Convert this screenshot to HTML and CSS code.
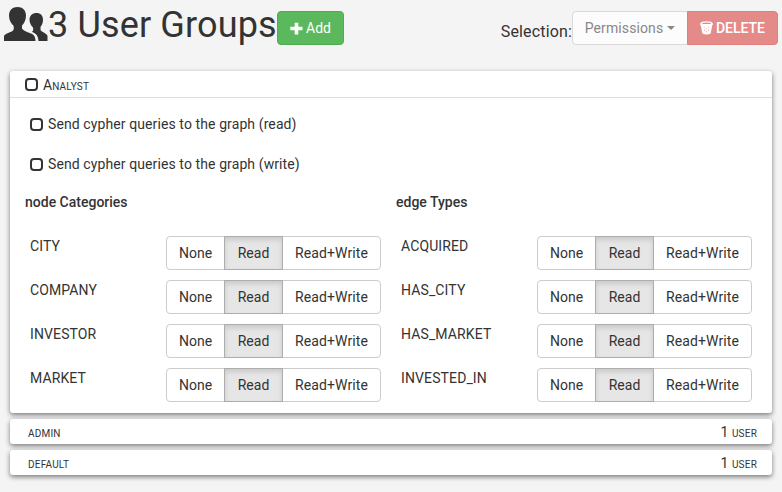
FILE: index.html
```
<!DOCTYPE html>
<html lang="en">
<head>
<meta charset="utf-8">
<title>User Groups</title>
<link rel="stylesheet" href="styles.css">
</head>
<body>
<header class="header">
  <svg class="users" viewBox="0 0 44 34" width="44" height="34" aria-hidden="true">
    <path d="M13.500 0C18.500 0 22 3.300 22 8.500C22 13 20 16.500 18 18.500V21.500C19 23.500 22 24.500 27 26.500C30.500 28 31.300 30 31.500 34H0V29.500C0 27 5 26 8.500 24C10 23 10 21 9.500 18.800C7 16.500 5 13 5 8.500C5 3.300 8.500 0 13.500 0Z"/>
    <path d="M32.500 6C36.500 6 39 8.700 39 12.500C39 16 37.800 18.200 36.500 20V23C37.500 25 43 26.500 43.500 29V34H34.500C34.300 29 32 26.500 27.800 24.800C29.200 24.200 29.500 22.500 29 20.500C27 18.500 25.500 16 25.500 12.500C25.500 8.700 28.500 6 32.500 6Z"/>
  </svg>
  <h1 class="title">3 User Groups</h1>
  <button class="btn btn-add"><svg viewBox="0 0 13 13" width="13" height="13" aria-hidden="true"><path d="M4.700 0.800h3.600v4h4.200v3.400H8.300v4.300H4.700V8.200H0.300V4.800h4.400z"/></svg><span>Add</span></button>
  <div class="selection">
    <span class="selection-label">Selection:</span>
    <div class="group">
      <button class="btn permissions"><span>Permissions</span><i class="caret"></i></button>
      <button class="btn delete"><svg viewBox="0 0 13 14" width="13" height="14" aria-hidden="true"><path fill-rule="evenodd" d="M2 .8Q6.500-.5 11 .8L12.800 2.300V4.300H12.200L10.700 12.400Q6.500 14.500 2.300 12.400L.8 4.300H.2V2.300ZM2.300 2.100V3H10.700V2.100Q6.500 1 2.300 2.100ZM3.700 5.700V6.600H4.600V5.700ZM8 5.700V6.600H8.900V5.700ZM5.800 7.200V8.100H6.700V7.200ZM4 8.800V9.700H4.900V8.800ZM8 8.600V9.500H8.900V8.600ZM6 10.300V11.200H6.900V10.300Z"/></svg><span>DELETE</span></button>
    </div>
  </div>
</header>
<main class="cards">
  <section class="card open">
    <div class="card-head"><i class="check"></i><span class="name">A<span class="small">nalyst</span></span></div>
    <label class="option"><i class="check"></i><span>Send cypher queries to the graph (read)</span></label>
    <label class="option"><i class="check"></i><span>Send cypher queries to the graph (write)</span></label>
    <div class="columns">
      <div class="column">
        <h2 class="subtitle">node Categories</h2>
        <div class="row"><span class="row-name">CITY</span><div class="group"><button class="btn">None</button><button class="btn active">Read</button><button class="btn wide">Read+Write</button></div></div>
        <div class="row"><span class="row-name">COMPANY</span><div class="group"><button class="btn">None</button><button class="btn active">Read</button><button class="btn wide">Read+Write</button></div></div>
        <div class="row"><span class="row-name">INVESTOR</span><div class="group"><button class="btn">None</button><button class="btn active">Read</button><button class="btn wide">Read+Write</button></div></div>
        <div class="row"><span class="row-name">MARKET</span><div class="group"><button class="btn">None</button><button class="btn active">Read</button><button class="btn wide">Read+Write</button></div></div>
      </div>
      <div class="column">
        <h2 class="subtitle">edge Types</h2>
        <div class="row"><span class="row-name">ACQUIRED</span><div class="group"><button class="btn">None</button><button class="btn active">Read</button><button class="btn wide">Read+Write</button></div></div>
        <div class="row"><span class="row-name">HAS_CITY</span><div class="group"><button class="btn">None</button><button class="btn active">Read</button><button class="btn wide">Read+Write</button></div></div>
        <div class="row"><span class="row-name">HAS_MARKET</span><div class="group"><button class="btn">None</button><button class="btn active">Read</button><button class="btn wide">Read+Write</button></div></div>
        <div class="row"><span class="row-name">INVESTED_IN</span><div class="group"><button class="btn">None</button><button class="btn active">Read</button><button class="btn wide">Read+Write</button></div></div>
      </div>
    </div>
  </section>
  <section class="card closed"><span class="small">admin</span><span>1 <span class="small">user</span></span></section>
  <section class="card closed"><span class="small">default</span><span>1 <span class="small">user</span></span></section>
</main>
</body>
</html>
```
FILE: styles.css
```
* { box-sizing: border-box; }
body {
  margin: 0;
  min-height: 100vh;
  background: #f4f4f4;
  color: #333;
  font: 14px/20px Roboto, sans-serif;
}
.header {
  display: flex;
  align-items: flex-start;
  height: 71px;
  padding: 7px 4px 0;
}
.users { fill: #333; flex: none; }
.title {
  width: 229px;
  margin: -2px 0 0;
  font-size: 36px;
  font-weight: 400;
  line-height: 40px;
  letter-spacing: .15px;
  white-space: nowrap;
}
.btn {
  display: flex;
  align-items: center;
  justify-content: center;
  width: 59px;
  height: 34px;
  padding: 0;
  border: 1px solid #ccc;
  border-radius: 4px;
  background: #fff;
  color: #333;
  font: inherit;
  white-space: nowrap;
}
.btn svg { fill: currentColor; }
.btn-add {
  width: 67px;
  margin-top: 4px;
  gap: 3px;
  border-color: #4cae4c;
  background: #5cb85c;
  color: #fff;
}
.selection {
  display: flex;
  margin: 4px 0 0 auto;
}
.selection-label {
  margin-top: 11px;
  font-size: 16px;
  letter-spacing: .15px;
}
.group { display: flex; }
.group .btn + .btn { margin-left: -1px; }
.group .btn:not(:last-child) { border-top-right-radius: 0; border-bottom-right-radius: 0; }
.group .btn:not(:first-child) { border-top-left-radius: 0; border-bottom-left-radius: 0; }
.group .wide { width: 99px; letter-spacing: .1px; }
.group .active {
  z-index: 1;
  background: #e6e6e6;
  border-color: #adadad;
  box-shadow: inset 0 3px 5px rgba(0, 0, 0, .125);
}
.group .permissions {
  width: 116px;
  gap: 4px;
  border-color: #d9d9d9;
  background: #fcfcfc;
  color: #888;
  letter-spacing: .1px;
}
.caret {
  border: 4px solid transparent;
  border-top-color: currentColor;
  border-bottom: 0;
}
.group .delete {
  width: 91px;
  gap: 3px;
  background: #e48b89;
  border-color: #df7e7b;
  color: #fff;
  font-weight: 500;
}
.cards {
  display: flex;
  flex-direction: column;
  gap: 6px;
  padding: 0 10px 12px;
}
.card {
  border-radius: 3px;
  background: #fff;
  box-shadow: 0 2px 5px rgba(0, 0, 0, .5);
}
.open { height: 342px; }
.card-head {
  display: flex;
  align-items: center;
  gap: 5px;
  height: 27px;
  padding: 1px 15px 0;
  border-bottom: 1px solid #ddd;
}
.name { padding-top: 2px; }
.small { font-size: 10px; letter-spacing: .2px; text-transform: uppercase; }
.check {
  width: 13px;
  height: 13px;
  border: 2px solid #333;
  border-radius: 4px;
}
.option {
  display: flex;
  align-items: center;
  gap: 5px;
  height: 20px;
  margin: 16px 20px 0;
  letter-spacing: .1px;
}
.option + .option { margin-top: 20px; }
.columns { display: flex; padding: 18px 15px 0; }
.column { flex: none; width: 371px; }
.column + .column { width: 356px; }
.subtitle {
  margin: 0 0 24px;
  font-size: 14px;
  font-weight: 500;
  line-height: 20px;
}
.row {
  display: flex;
  height: 34px;
  margin-bottom: 10px;
}
.row-name { width: 141px; padding-left: 5px; letter-spacing: .12px; }
.closed {
  display: flex;
  align-items: baseline;
  justify-content: space-between;
  height: 25px;
  padding: 3px 15px 0 18px;
}
```
